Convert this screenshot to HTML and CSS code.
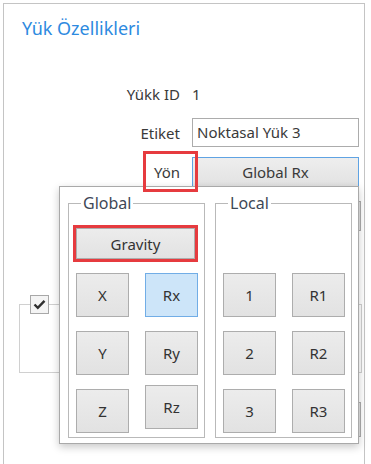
FILE: index.html
```html
<!DOCTYPE html>
<html lang="tr">
<head>
<meta charset="utf-8">
<title>Yük Özellikleri</title>
<link rel="stylesheet" href="styles.css">
</head>
<body>
<div class="panel">
  <h1 class="title">Yük Özellikleri</h1>
  <div class="form">
    <span class="label">Yükk ID</span><span class="value">1</span>
    <span class="label">Etiket</span><div class="input">Noktasal Yük 3</div>
    <span class="label"><span class="mark">Yön</span></span><div class="combo">Global Rx</div>
    <span class="label"></span><div class="ctl-behind"></div>
  </div>
  <div class="group">
    <span class="check"><svg width="13" height="11" viewBox="0 0 13 11"><path d="M1.5 5.5 L4.8 8.8 L11.5 1.8" fill="none" stroke="#2f2f2f" stroke-width="2.4"/></svg></span>
  </div>
  <div class="btn-behind"></div>

  <div class="popup">
    <fieldset class="box">
      <legend>Global</legend>
      <div class="btn gravity">Gravity</div>
      <div class="grid">
        <div class="btn">X</div><div class="btn sel">Rx</div>
        <div class="btn">Y</div><div class="btn">Ry</div>
        <div class="btn">Z</div><div class="btn up">Rz</div>
      </div>
    </fieldset>
    <fieldset class="box">
      <legend>Local</legend>
      <div class="spacer"></div>
      <div class="grid">
        <div class="btn">1</div><div class="btn">R1</div>
        <div class="btn">2</div><div class="btn">R2</div>
        <div class="btn">3</div><div class="btn">R3</div>
      </div>
    </fieldset>
  </div>
</div>
</body>
</html>
```
FILE: styles.css
```css
* { box-sizing: border-box; }
html, body { margin: 0; background: #fff; }
body {
  font-family: "Noto Sans", "Open Sans", sans-serif;
  font-size: 15px;
  color: #3a3a3a;
  width: 371px;
  height: 464px;
  overflow: hidden;
}
.panel {
  position: relative;
  margin: 3px 0 0 3px;
  width: 362px;
  height: 461px;
  border: 1px solid #c4c4c4;
  border-bottom: none;
}
.title {
  margin: 12px 0 0 18px;
  font-size: 18px;
  line-height: 24px;
  font-weight: 400;
  color: #2d8ae0;
}
.form {
  display: grid;
  grid-template-columns: 176px 167px;
  grid-auto-rows: 30px;
  column-gap: 12px;
  row-gap: 9px;
  align-items: center;
  margin-top: 39px;
}
.label { justify-self: end; line-height: 20px; }
.value { line-height: 20px; }
.mark { position: relative; display: inline-block; }
.mark::after {
  content: "";
  position: absolute;
  left: -11px; right: -18px; top: -11px; bottom: -10px;
  border: 3px solid #e63b3f;
  z-index: 2;
}
.input {
  height: 29px;
  align-self: start;
  border: 1px solid #acacac;
  padding-left: 4px;
  line-height: 27px;
}
.combo {
  height: 30px;
  border: 1px solid #5fa3e3;
  background: linear-gradient(#eeeeee, #e2e2e2);
  text-align: center;
  line-height: 28px;
}
.ctl-behind {
  height: 30px;
  width: 169px;
  margin-top: 10px;
  border: 1px solid #adadad;
  background: #e1e1e1;
}
.group {
  margin: 78px 2px 0 15px;
  height: 69px;
  border: 1px solid #d0d0d0;
}
.check {
  display: flex;
  align-items: center;
  justify-content: center;
  width: 19px;
  height: 19px;
  margin: -10px 0 0 10px;
  border: 1px solid #a8a8a8;
  background: #f4f4f4;
}
.btn-behind {
  margin: 29px 0 0 256px;
  width: 101px;
  height: 35px;
  border: 1px solid #adadad;
  background: #e1e1e1;
}
.popup {
  position: absolute;
  left: 55px;
  top: 182px;
  width: 300px;
  z-index: 1;
  display: flex;
  gap: 10px;
  padding: 6px 6px 5px 8px;
  background: #fff;
  border: 1px solid #a9a9a9;
  box-shadow: 0 3px 8px rgba(0, 0, 0, 0.22);
}
.box {
  width: 137px;
  min-width: 0;
  margin: 0;
  padding: 15px 5px 4px 7px;
  border: 1px solid #b9b9b9;
}
.box legend {
  margin-left: 5px;
  padding: 0 2px;
  font-size: 16px;
  line-height: 20px;
  color: #3e4856;
}
.btn {
  display: flex;
  align-items: center;
  justify-content: center;
  border: 1px solid #adadad;
  background: linear-gradient(#ececec, #e2e2e2);
  color: #333;
}
.gravity {
  width: 119px;
  height: 31px;
  margin-bottom: 14px;
  outline: 3px solid #e63b3f;
}
.spacer { height: 31px; margin-bottom: 14px; }
.grid {
  display: grid;
  grid-template-columns: 53px 53px;
  grid-auto-rows: 44px;
  column-gap: 16px;
  row-gap: 14px;
}
.btn.sel { background: #cde5f9; border-color: #71ade6; }
.btn.up { margin-top: -4px; margin-bottom: 4px; }
```
